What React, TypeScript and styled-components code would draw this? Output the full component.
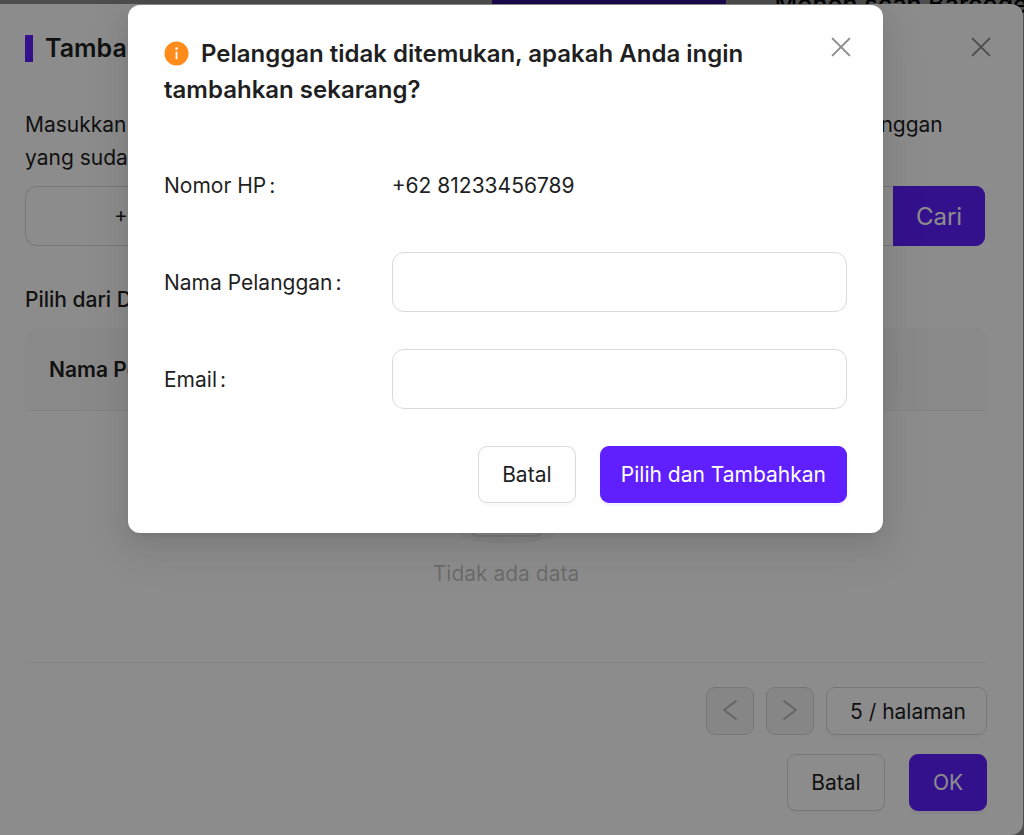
import React from "react";
import styled, { createGlobalStyle } from "styled-components";

const GlobalStyle = createGlobalStyle`
  * { box-sizing: border-box; }
  body {
    margin: 0;
    background: #fff;
    color: #1f1f1f;
    font-family: Inter, "Liberation Sans", sans-serif;
    font-size: 21px;
    line-height: 33px;
  }
  button, input, select { font: inherit; color: inherit; margin: 0; }
  h1, h2, p { margin: 0; }
`;

const Stage = styled.div`
  display: grid;
  grid-template-columns: minmax(0, 1fr);
  min-height: 100vh;
  overflow: hidden;
  > * { grid-area: 1 / 1; }
`;

const TopBar = styled.header`
  display: flex;
  align-items: flex-end;
  gap: 49px;
  height: 18px;
  padding-left: 48%;
  overflow: hidden;
  white-space: nowrap;
`;

const TopTab = styled.div`
  flex: 0 0 234px;
  height: 18px;
  background: #601fff;
`;

const TopText = styled.span`
  font-size: 25px;
  font-weight: 500;
  line-height: 28px;
  color: #000;
`;

const Backdrop = styled.div`
  display: flex;
  align-items: flex-start;
  isolation: isolate;
  background: rgba(0, 0, 0, 0.45);
`;

const DialogBackdrop = styled(Backdrop)`
  justify-content: center;
  padding: 5px 13px 5px 0;
`;

const Panel = styled.section`
  flex: 1;
  min-width: 0;
  margin: 4px 1px 0 0;
  padding: 28px 36px 24px 25px;
  background: #fff;
  border-radius: 0 12px 12px 0;
`;

const PanelHeader = styled.div`
  display: flex;
  align-items: center;
  height: 33px;
  margin-bottom: 43px;
`;

const PanelTitle = styled.h1`
  flex: 1;
  padding-left: 12px;
  font-size: 25px;
  font-weight: 600;
`;

const TitleBar = styled.span`
  width: 8px;
  height: 27px;
  background: #601fff;
`;

const IconButton = styled.button`
  display: flex;
  padding: 0;
  border: 0;
  background: none;
  color: rgba(0, 0, 0, 0.45);
`;

const PanelClose = styled(IconButton)`
  margin: 0 -4px 4px 0;
`;

const SearchRow = styled.form`
  display: flex;
  margin: 12px 2px 37px 0;
`;

const TextField = styled.input`
  width: 100%;
  min-width: 0;
  height: 60px;
  padding: 0 18px;
  border: 1px solid #d9d9d9;
  border-radius: 12px;
  background: #fff;
  outline: 0;
`;

const PhoneField = styled(TextField)`
  flex: 1;
  padding-left: 88px;
  border-right: 0;
  border-radius: 12px 0 0 12px;
`;

const Button = styled.button<{ $primary?: boolean }>`
  min-width: ${(p) => (p.$primary ? "78px" : "98px")};
  height: 57px;
  padding: 0 20px;
  border: 1px solid ${(p) => (p.$primary ? "#601fff" : "#d9d9d9")};
  border-radius: 9px;
  background: ${(p) => (p.$primary ? "#601fff" : "#fff")};
  color: ${(p) => (p.$primary ? "#fff" : "#1f1f1f")};
  box-shadow: 0 3px 0 ${(p) => (p.$primary ? "rgba(96, 31, 255, 0.06)" : "rgba(0, 0, 0, 0.02)")};
  white-space: nowrap;
`;

const SearchButton = styled(Button)`
  min-width: 92px;
  height: 60px;
  border-radius: 0 9px 9px 0;
  box-shadow: none;
  font-size: 24px;
`;

const SectionLabel = styled.p`
  font-weight: 500;
  margin-bottom: 12px;
`;

const Table = styled.table`
  width: 100%;
  border-spacing: 0;
  table-layout: fixed;
`;

const HeadCell = styled.th`
  position: relative;
  height: 83px;
  padding: 0 24px;
  border-bottom: 1px solid #f0f0f0;
  background: #fafafa;
  font-weight: 600;
  text-align: left;
  &:first-child { border-top-left-radius: 12px; }
  &:first-child::after {
    content: "";
    position: absolute;
    top: 24px;
    right: 0;
    width: 1px;
    height: 34px;
    background: #f0f0f0;
  }
  &:last-child { width: 90px; border-top-right-radius: 12px; }
`;

const EmptyCell = styled.td`
  height: 252px;
  padding: 0;
  border-bottom: 1px solid #f0f0f0;
  color: rgba(0, 0, 0, 0.25);
  text-align: center;
`;

const EmptyArt = styled.svg`
  display: block;
  margin: 0 auto 12px;
`;

const Pagination = styled.nav`
  display: flex;
  justify-content: flex-end;
  gap: 12px;
  margin: 24px 0 19px;
`;

const PageButton = styled.button`
  display: flex;
  align-items: center;
  justify-content: center;
  width: 48px;
  height: 48px;
  padding: 0 0 2px;
  border: 1px solid #d9d9d9;
  border-radius: 9px;
  background: #f5f5f5;
  color: rgba(0, 0, 0, 0.25);
`;

const PageSize = styled.select`
  width: 161px;
  height: 48px;
  padding: 0 12px 0 23px;
  border: 1px solid #d9d9d9;
  border-radius: 9px;
  background: #fff;
  box-shadow: 0 3px 0 rgba(0, 0, 0, 0.02);
  appearance: none;
`;

const Actions = styled.div`
  display: flex;
  justify-content: flex-end;
  gap: 24px;
`;

const Dialog = styled.div`
  width: 755px;
  max-width: 100%;
  padding: 31px 36px 30px;
  border-radius: 12px;
  background: #fff;
  box-shadow: 0 9px 24px rgba(0, 0, 0, 0.08), 0 5px 9px -6px rgba(0, 0, 0, 0.12),
    0 14px 42px 12px rgba(0, 0, 0, 0.05);
`;

const DialogHeader = styled.div`
  display: flex;
  align-items: flex-start;
  justify-content: space-between;
  margin-bottom: 47px;
`;

const DialogTitle = styled.h2`
  max-width: 600px;
  font-size: 24px;
  font-weight: 600;
  line-height: 36px;
`;

const InfoIcon = styled.svg`
  margin-right: 12px;
  vertical-align: -4px;
`;

const DialogClose = styled(IconButton)`
  margin: 1px -4px 0 0;
`;

const Fields = styled.div`
  display: grid;
  grid-template-columns: 1fr 2fr;
  grid-auto-rows: 60px;
  align-items: center;
  row-gap: 37px;
  margin-bottom: 37px;
`;

const FieldLabel = styled.label`
  &::after {
    content: ":";
    margin-left: 3px;
  }
`;

function CloseIcon() {
  return (
    <svg width="20" height="20" viewBox="0 0 20 20" fill="none" stroke="currentColor" strokeWidth="2" strokeLinecap="round" aria-hidden="true">
      <path d="M1.6 1.6l16.8 16.8M18.4 1.6L1.6 18.4" />
    </svg>
  );
}

function Chevron({ d }: { d: string }) {
  return (
    <svg width="16" height="22" viewBox="0 0 16 22" fill="none" stroke="currentColor" strokeWidth="2" strokeLinecap="round" strokeLinejoin="round" aria-hidden="true">
      <path d={d} />
    </svg>
  );
}

export default function App() {
  const stop = (e: React.FormEvent) => e.preventDefault();
  return (
    <>
      <GlobalStyle />
      <Stage>
        <TopBar>
          <TopTab />
          <TopText>Mohon scan Barcode</TopText>
        </TopBar>
        <Backdrop>
          <Panel>
            <PanelHeader>
              <TitleBar />
              <PanelTitle>Tambah Pelanggan</PanelTitle>
              <PanelClose type="button" aria-label="Tutup"><CloseIcon /></PanelClose>
            </PanelHeader>
            <p>
              Masukkan nomor HP pelanggan untuk menambahkan ataupun memilih dari daftar pelanggan yang sudah
              terdaftar
            </p>
            <SearchRow onSubmit={stop}>
              <PhoneField type="tel" aria-label="Nomor HP pelanggan" defaultValue="+62" />
              <SearchButton $primary type="submit">Cari</SearchButton>
            </SearchRow>
            <SectionLabel>Pilih dari Daftar Pelanggan</SectionLabel>
            <Table>
              <thead>
                <tr>
                  <HeadCell scope="col">Nama Pelanggan</HeadCell>
                  <HeadCell scope="col" aria-label="Aksi" />
                </tr>
              </thead>
              <tbody>
                <tr>
                  <EmptyCell colSpan={2}>
                    <EmptyArt width="97" height="62" viewBox="0 0 64 41" aria-hidden="true">
                      <ellipse cx="32" cy="33" rx="32" ry="7" fill="#f5f5f5" />
                      <g stroke="#d9d9d9" fillRule="nonzero">
                        <path fill="none" d="M55 12.76L44.854 1.258C44.367.474 43.656 0 42.907 0H21.093c-.749 0-1.46.474-1.947 1.257L9 12.761V22h46v-9.24z" />
                        <path fill="#fafafa" d="M41.613 15.931c0-1.605.994-2.93 2.227-2.931H55v18.137C55 33.26 53.68 35 52.05 35h-40.1C10.32 35 9 33.259 9 31.137V13h11.16c1.233 0 2.227 1.323 2.227 2.928v.022c0 1.605 1.005 2.901 2.237 2.901h14.752c1.232 0 2.237-1.308 2.237-2.913v-.007z" />
                      </g>
                    </EmptyArt>
                    Tidak ada data
                  </EmptyCell>
                </tr>
              </tbody>
            </Table>
            <Pagination aria-label="Halaman">
              <PageButton type="button" disabled aria-label="Sebelumnya"><Chevron d="M14 2L2 11l12 9" /></PageButton>
              <PageButton type="button" disabled aria-label="Berikutnya"><Chevron d="M2 2l12 9-12 9" /></PageButton>
              <PageSize aria-label="Jumlah per halaman">
                <option>5 / halaman</option>
              </PageSize>
            </Pagination>
            <Actions>
              <Button type="button">Batal</Button>
              <Button $primary type="button">OK</Button>
            </Actions>
          </Panel>
        </Backdrop>
        <DialogBackdrop>
          <Dialog role="dialog" aria-modal="true" aria-labelledby="dialog-title">
            <DialogHeader>
              <DialogTitle id="dialog-title">
                <InfoIcon width="25" height="25" viewBox="0 0 25 25" aria-hidden="true">
                  <circle cx="12.5" cy="12.5" r="12" fill="#ff8c1a" />
                  <circle cx="12.5" cy="7.6" r="1.3" fill="#fff" />
                  <path d="M12.5 10.6v7.6" stroke="#fff" strokeWidth="1.8" />
                </InfoIcon>
                Pelanggan tidak ditemukan, apakah Anda ingin tambahkan sekarang?
              </DialogTitle>
              <DialogClose type="button" aria-label="Tutup"><CloseIcon /></DialogClose>
            </DialogHeader>
            <form onSubmit={stop}>
              <Fields>
                <FieldLabel htmlFor="phone">Nomor HP</FieldLabel>
                <output id="phone">+62 81233456789</output>
                <FieldLabel htmlFor="name">Nama Pelanggan</FieldLabel>
                <TextField id="name" type="text" />
                <FieldLabel htmlFor="email">Email</FieldLabel>
                <TextField id="email" type="email" />
              </Fields>
              <Actions>
                <Button type="button">Batal</Button>
                <Button $primary type="submit">Pilih dan Tambahkan</Button>
              </Actions>
            </form>
          </Dialog>
        </DialogBackdrop>
      </Stage>
    </>
  );
}
